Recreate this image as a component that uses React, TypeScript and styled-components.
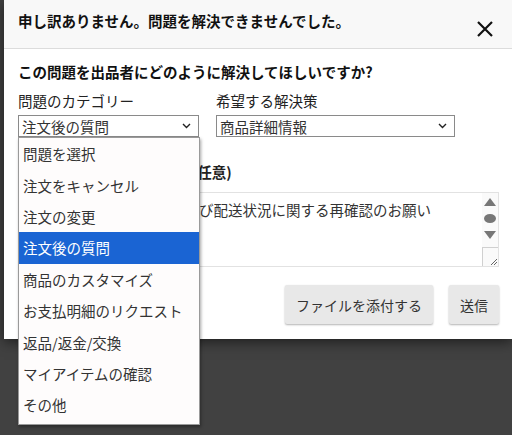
import styled, { createGlobalStyle } from 'styled-components';

const GlobalStyle = createGlobalStyle`
  html, body {
    margin: 0;
    padding: 0;
    background: #404040;
    font-family: 'Noto Sans CJK JP', 'Noto Sans', sans-serif;
  }
  #root {
    width: 512px;
    height: 435px;
    overflow: hidden;
  }
`;

const Backdrop = styled.div`
  width: 512px;
  height: 435px;
  background: #414141;
  padding-left: 4px;
  box-sizing: border-box;
`;

const Modal = styled.div`
  width: 508px;
  background: #fff;
  box-shadow: 0 3px 12px rgba(0, 0, 0, 0.55);
`;

const Header = styled.div`
  display: flex;
  justify-content: space-between;
  align-items: flex-start;
  height: 49px;
  padding: 12px 14px 0 14px;
  box-sizing: border-box;
  background: #f8f8f8;
  border-bottom: 1px solid #dcdcdc;
`;

const Title = styled.h2`
  margin: 0;
  font-size: 14.5px;
  line-height: 18px;
  font-weight: 700;
  color: #111;
`;

const CloseButton = styled.button`
  border: none;
  background: none;
  padding: 0;
  margin: 8px 4px 0 0;
  width: 18px;
  height: 18px;
  cursor: pointer;
`;

const Body = styled.div`
  padding: 14px 13px 15px 14px;
`;

const Question = styled.p`
  margin: 0;
  font-size: 14.5px;
  line-height: 18px;
  font-weight: 700;
  color: #111;
`;

const FieldRow = styled.div`
  display: flex;
  gap: 17px;
  margin-top: 11px;
`;

const Field = styled.div<{ $width: number }>`
  position: relative;
  width: ${(p) => p.$width}px;
`;

const Label = styled.div<{ $bold?: boolean }>`
  font-size: 14.5px;
  line-height: 18px;
  font-weight: ${(p) => (p.$bold ? 700 : 400)};
  color: #222;
`;

const Select = styled.div`
  display: flex;
  align-items: center;
  justify-content: space-between;
  margin-top: 5px;
  height: 22px;
  box-sizing: border-box;
  border: 1px solid #8a8a8a;
  padding: 0 7px 0 3px;
  font-size: 14.5px;
  color: #333;
  background: #fff;
`;

const Menu = styled.ul`
  position: absolute;
  top: 100%;
  left: 0;
  width: 182px;
  margin: 0;
  padding: 0 0 3px;
  list-style: none;
  background: #fefcfc;
  border: 1px solid #9a9a9a;
  box-sizing: border-box;
  box-shadow: 1px 2px 3px rgba(0, 0, 0, 0.35);
  z-index: 2;
`;

const MenuItem = styled.li<{ $active?: boolean }>`
  height: 31.4px;
  display: flex;
  align-items: center;
  padding-left: 4px;
  font-size: 14.5px;
  color: ${(p) => (p.$active ? '#fff' : '#333')};
  background: ${(p) => (p.$active ? '#1a64d3' : 'transparent')};
`;

const MessageLabel = styled(Label)`
  margin-top: 26px;
`;

const TextBox = styled.div`
  display: flex;
  margin-top: 11px;
  height: 75px;
  border: 1px solid #e2e2e2;
  box-sizing: border-box;
`;

const TextArea = styled.div`
  flex: 1;
  padding: 8px 6px;
  font-size: 14.5px;
  line-height: 18px;
  color: #333;
`;

const ScrollBar = styled.div`
  width: 16px;
  display: flex;
  flex-direction: column;
  align-items: center;
  background: #fafafa;
  padding-top: 5px;
  gap: 8px;
`;

const ArrowUp = styled.span`
  width: 0;
  height: 0;
  border-left: 6px solid transparent;
  border-right: 6px solid transparent;
  border-bottom: 8px solid #777;
`;

const ArrowDown = styled.span`
  width: 0;
  height: 0;
  border-left: 6px solid transparent;
  border-right: 6px solid transparent;
  border-top: 8px solid #777;
`;

const Thumb = styled.span`
  width: 12px;
  height: 9px;
  border-radius: 50%;
  background: #777;
`;

const Grip = styled.div`
  margin-top: auto;
  width: 16px;
  height: 19px;
  border-top: 1px solid #d0d0d0;
  border-left: 1px solid #d0d0d0;
  box-sizing: border-box;
  display: flex;
  align-items: flex-end;
  justify-content: flex-end;
`;

const Actions = styled.div`
  display: flex;
  justify-content: flex-end;
  gap: 16px;
  margin-top: 18px;
`;

const Button = styled.button`
  height: 39px;
  padding: 0 11px;
  border: none;
  border-radius: 2px;
  background: #e8e8e8;
  box-shadow: 0 1px 2px rgba(0, 0, 0, 0.3);
  font-family: inherit;
  font-size: 14px;
  color: #333;
`;

const Chevron = () => (
  <svg width="9" height="6" viewBox="0 0 9 6">
    <path d="M1 1l3.5 3.5L8 1" fill="none" stroke="#222" strokeWidth="1.4" />
  </svg>
);

const categories = [
  '問題を選択',
  '注文をキャンセル',
  '注文の変更',
  '注文後の質問',
  '商品のカスタマイズ',
  'お支払明細のリクエスト',
  '返品/返金/交換',
  'マイアイテムの確認',
  'その他',
];

const App = () => {
  return (
    <Backdrop>
      <GlobalStyle />
      <Modal>
        <Header>
          <Title>申し訳ありません。問題を解決できませんでした。</Title>
          <CloseButton aria-label="閉じる">
            <svg width="18" height="18" viewBox="0 0 18 18">
              <path d="M2 2l14 14M16 2L2 16" stroke="#111" strokeWidth="2.2" />
            </svg>
          </CloseButton>
        </Header>
        <Body>
          <Question>この問題を出品者にどのように解決してほしいですか?</Question>
          <FieldRow>
            <Field $width={181}>
              <Label>問題のカテゴリー</Label>
              <Select>
                <span>注文後の質問</span>
                <Chevron />
              </Select>
              <Menu>
                {categories.map((c) => (
                  <MenuItem key={c} $active={c === '注文後の質問'}>
                    {c}
                  </MenuItem>
                ))}
              </Menu>
            </Field>
            <Field $width={239}>
              <Label>希望する解決策</Label>
              <Select>
                <span>商品詳細情報</span>
                <Chevron />
              </Select>
            </Field>
          </FieldRow>
          <MessageLabel $bold>出品者へのメッセージ内容(任意)</MessageLabel>
          <TextBox>
            <TextArea>ご注文商品の在庫状況および配送状況に関する再確認のお願い</TextArea>
            <ScrollBar>
              <ArrowUp />
              <Thumb />
              <ArrowDown />
              <Grip>
                <svg width="10" height="10" viewBox="0 0 10 10">
                  <path d="M9 3L3 9M9 6L6 9" stroke="#666" strokeWidth="1" />
                </svg>
              </Grip>
            </ScrollBar>
          </TextBox>
          <Actions>
            <Button>ファイルを添付する</Button>
            <Button>送信</Button>
          </Actions>
        </Body>
      </Modal>
    </Backdrop>
  );
};

export default App;
